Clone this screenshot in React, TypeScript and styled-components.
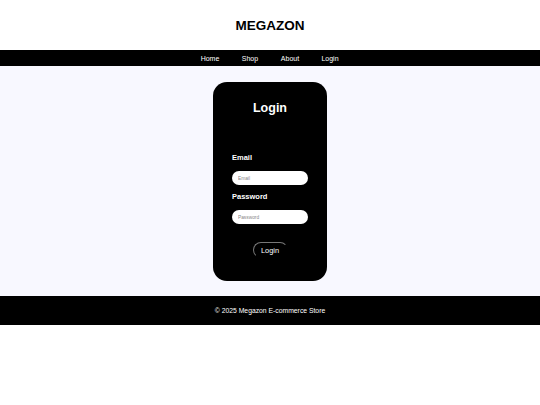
import styled, { createGlobalStyle } from "styled-components";

const GlobalStyle = createGlobalStyle`
  body {
    margin: 0;
    font-family: "Liberation Sans", Arial, sans-serif;
    background: #fff;
  }
`;

const links = ["Home", "Shop", "About", "Login"];

const App = () => {
  return (
    <Page>
      <GlobalStyle />
      <Header>
        <Title>MEGAZON</Title>
      </Header>
      <Nav>
        {links.map((l) => (
          <NavLink key={l} href="#">
            {l}
          </NavLink>
        ))}
      </Nav>
      <Main>
        <Card>
          <CardTitle>Login</CardTitle>
          <Label htmlFor="email" top="38.5px">Email</Label>
          <Input id="email" type="email" placeholder="Email" />
          <Label htmlFor="password" top="7.7px">Password</Label>
          <Input id="password" type="password" placeholder="Password" />
          <Button>Login</Button>
        </Card>
      </Main>
      <Footer>© 2025 Megazon E-commerce Store</Footer>
    </Page>
  );
};

export default App;

const Page = styled.div`
  display: flex;
  flex-direction: column;
  width: 100%;
`;

const Header = styled.header`
  height: 50px;
  display: flex;
  justify-content: center;
  align-items: center;
  background: #fff;
`;

const Title = styled.h1`
  margin: 0;
  font-size: 13.5px;
  font-weight: bold;
  color: #000;
`;

const Nav = styled.nav`
  height: 16px;
  background: #000;
  display: flex;
  justify-content: center;
  align-items: center;
`;

const NavLink = styled.a`
  width: 40px;
  text-align: center;
  color: #fff;
  text-decoration: none;
  font-size: 7px;
`;

const Main = styled.main`
  background: #f8f8ff;
  height: 230px;
  display: flex;
  justify-content: center;
  padding-top: 16px;
  box-sizing: border-box;
`;

const Card = styled.div`
  width: 114px;
  height: 199px;
  box-sizing: border-box;
  background: #000;
  border-radius: 14px;
  padding: 0 19px;
  display: flex;
  flex-direction: column;
  color: #fff;
`;

const CardTitle = styled.h2`
  margin: 19px 0 0;
  font-size: 12.5px;
  line-height: 14.4px;
  text-align: center;
  font-weight: bold;
`;

const Label = styled.label<{ top: string }>`
  margin-top: ${({ top }) => top};
  font-size: 7.5px;
  line-height: 8.6px;
  font-weight: bold;
`;

const Input = styled.input`
  margin-top: 8.7px;
  width: 76px;
  height: 14px;
  box-sizing: border-box;
  border: none;
  border-radius: 7px;
  background: #fff;
  padding: 0 6px;
  font-family: "Liberation Sans", Arial, sans-serif;
  font-size: 4.8px;
  outline: none;

  &::placeholder {
    color: #888;
  }
`;

const Button = styled.button`
  align-self: center;
  margin-top: 18px;
  width: 35px;
  height: 16px;
  padding: 0;
  background: transparent;
  color: #fff;
  font-family: "Liberation Sans", Arial, sans-serif;
  font-size: 7.4px;
  border: 1px solid;
  border-color: #777 transparent transparent #777;
  border-radius: 12px;
  cursor: pointer;
`;

const Footer = styled.footer`
  height: 29px;
  background: #000;
  color: #fff;
  display: flex;
  justify-content: center;
  align-items: center;
  font-size: 6.8px;
`;
